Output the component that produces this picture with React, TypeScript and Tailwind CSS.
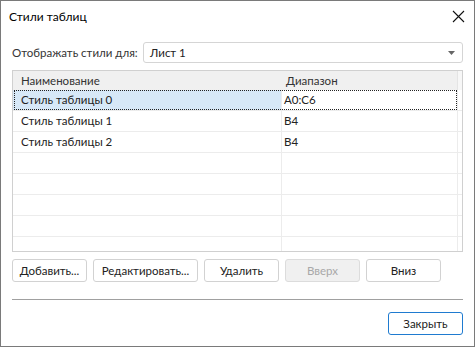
import React from 'react';

const font = { fontFamily: 'Lato, "Noto Sans", sans-serif' };

const rows = [
  { name: 'Стиль таблицы 0', range: 'A0:C6' },
  { name: 'Стиль таблицы 1', range: 'B4' },
  { name: 'Стиль таблицы 2', range: 'B4' },
  { name: '', range: '' },
  { name: '', range: '' },
  { name: '', range: '' },
  { name: '', range: '' },
];

const Btn: React.FC<{ label: string; w: string; disabled?: boolean }> = ({ label, w, disabled }) => (
  <div
    className={`${w} h-[23px] shrink-0 whitespace-nowrap flex items-center justify-center rounded-[3px] border text-[11.5px] ${
      disabled
        ? 'bg-[#f0f0f0] border-[#dcdcdc] text-[#a8a8a8]'
        : 'bg-white border-[#d2d2d2] text-[#222]'
    }`}
  >
    {label}
  </div>
);

export default function App() {
  return (
    <div
      className="w-[475px] h-[347px] bg-white border border-[#7a7a7a] flex flex-col text-[#222] overflow-hidden whitespace-nowrap"
      style={font}
    >
      <div className="h-[31px] flex items-center justify-between pl-[8px] pr-[8px]">
        <span className="text-[12px] text-black">Стили таблиц</span>
        <svg width="13" height="13" viewBox="0 0 13 13" className="mr-[1px]">
          <path d="M1 1 L12 12 M12 1 L1 12" stroke="#111" strokeWidth="1.1" />
        </svg>
      </div>

      <div className="flex items-center px-[11px] mt-[10px] h-[21px]">
        <span className="text-[11.5px] text-[#333] w-[131px] shrink-0">Отображать стили для:</span>
        <div className="flex-1 h-[21px] border border-[#d5d5d5] rounded-[3px] flex items-center justify-between pl-[6px] pr-[7px]">
          <span className="text-[11.5px]">Лист 1</span>
          <svg width="7" height="4" viewBox="0 0 7 4">
            <path d="M0 0 L7 0 L3.5 4 Z" fill="#666" />
          </svg>
        </div>
      </div>

      <div className="mx-[11px] mt-[7px] h-[182px] border border-[#d0d0d0] flex flex-col overflow-hidden">
        <div className="h-[19px] flex text-[11.5px] text-[#333] shrink-0">
          <div className="w-[268px] bg-[#f0f0f0] pl-[8px] flex items-center">Наименование</div>
          <div className="w-[176px] bg-[#f0f0f0] pl-[5px] flex items-center">Диапазон</div>
          <div className="flex-1 bg-[#f7f7f7] border-l border-[#e4e4e4]"></div>
        </div>
        {rows.map((r, i) => (
          <div key={i} className="h-[21px] flex text-[11.5px] shrink-0 border-b border-[#ececec] relative">
            <div
              className={`w-[268px] pl-[8px] flex items-center ${i === 0 ? 'bg-[#d7e8f7]' : ''}`}
            >
              {r.name}
            </div>
            <div className="w-[176px] pl-[2px] flex items-center border-l border-[#ececec]">{r.range}</div>
            <div className="flex-1 border-l border-[#ececec]"></div>
            {i === 0 && (
              <div className="absolute left-[1px] top-0 w-[443px] h-[20px] border border-dotted border-[#222]" />
            )}
          </div>
        ))}
        <div className="flex-1 flex">
          <div className="w-[268px]"></div>
          <div className="w-[176px] border-l border-[#ececec]"></div>
          <div className="flex-1 border-l border-[#ececec]"></div>
        </div>
      </div>

      <div className="flex px-[11px] mt-[7px] gap-[6px]">
        <Btn label="Добавить..." w="w-[75px]" />
        <Btn label="Редактировать..." w="w-[105px]" />
        <Btn label="Удалить" w="w-[75px]" />
        <Btn label="Вверх" w="w-[75px]" disabled />
        <Btn label="Вниз" w="w-[75px]" />
      </div>

      <div className="mx-[11px] mt-[17px] border-t border-[#a0a0a0]"></div>

      <div className="flex justify-end px-[11px] mt-[12px]">
        <div className="w-[75px] h-[23px] flex items-center justify-center rounded-[3px] border border-[#1f7bd0] text-[11.5px] text-[#222] bg-white">
          Закрыть
        </div>
      </div>
    </div>
  );
}
